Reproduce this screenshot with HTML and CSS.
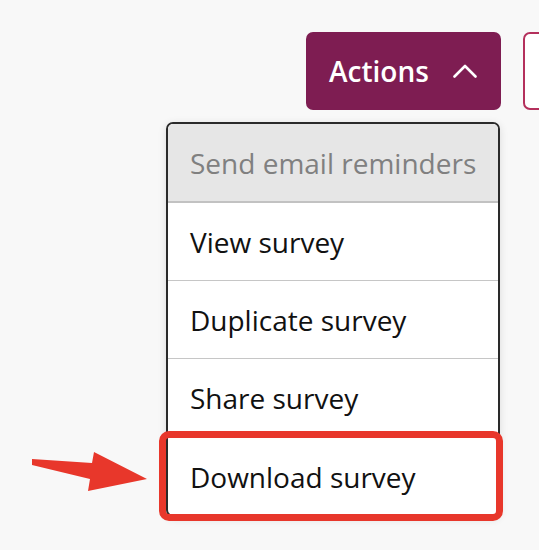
FILE: index.html
```html
<!DOCTYPE html>
<html>
<head>
<meta charset="utf-8">
<link rel="stylesheet" href="styles.css">
</head>
<body>
<div class="page">
  <div class="toolbar">
    <div class="dropdown">
      <button class="actions-btn">
        <span>Actions</span>
        <svg class="chev" width="24" height="14" viewBox="0 0 24 14"><path d="M1.5 12.5 L12 2 L22.5 12.5" fill="none" stroke="#fff" stroke-width="2.6" stroke-linecap="round" stroke-linejoin="round"/></svg>
      </button>
      <ul class="menu">
        <li class="item disabled">Send email reminders</li>
        <li class="item">View survey</li>
        <li class="item">Duplicate survey</li>
        <li class="item">Share survey</li>
        <li class="item">Download survey</li>
      </ul>
      <div class="highlight"></div>
    </div>
    <button class="second-btn"></button>
  </div>
  <svg class="arrow" width="120" height="42" viewBox="0 0 120 42"><polygon points="0,7 60,11 62,0 115,27 56,39 58,27 0,13" fill="#e8372b"/></svg>
</div>
</body>
</html>
```

FILE: styles.css
```css
html, body {
  margin: 0;
  padding: 0;
  background: #f8f8f8;
  overflow: hidden;
}
body {
  width: 539px;
  height: 550px;
  font-family: "Open Sans", "Noto Sans", sans-serif;
}
.page {
  position: relative;
  width: 539px;
  height: 550px;
}
.toolbar {
  display: flex;
  gap: 22px;
  padding: 32px 0 0 306px;
}
.dropdown {
  position: relative;
}
.actions-btn {
  display: flex;
  align-items: center;
  width: 195px;
  height: 78px;
  padding: 0 24px 0 23px;
  border: none;
  border-radius: 7px;
  background: #7e1d52;
  color: #fff;
  font-family: "Open Sans", "Noto Sans", sans-serif;
  font-weight: 600;
  font-size: 28px;
  box-sizing: border-box;
  justify-content: space-between;
}
.actions-btn span {
  line-height: 1;
  margin-top: 0;
}
.chev {
  display: block;
}
.second-btn {
  flex: none;
  width: 160px;
  height: 78px;
  border: 2px solid #b4305c;
  border-radius: 7px;
  background: #fff;
  box-sizing: border-box;
}
.menu {
  position: absolute;
  top: 90px;
  right: 1px;
  width: 334px;
  margin: 0;
  padding: 0;
  list-style: none;
  background: #fff;
  border: 2px solid #2a2a2a;
  border-radius: 7px;
  box-sizing: border-box;
  overflow: hidden;
  box-shadow: 0 2px 8px rgba(0,0,0,0.12);
}
.item {
  display: flex;
  align-items: center;
  height: 77px;
  padding: 0 0 0 22px;
  font-size: 28px;
  color: #111;
  border-bottom: 1px solid #c6c6c6;
  box-sizing: content-box;
}
.item:last-child {
  border-bottom: none;
  height: 76px;
  padding-top: 2px;
}
.item.disabled {
  background: #e6e6e6;
  color: #808080;
  border-bottom: 2px solid #c2c2c2;
}
.highlight {
  position: absolute;
  left: -147px;
  top: 399px;
  width: 344px;
  height: 90px;
  border: 7px solid #e8372b;
  border-radius: 10px;
  box-sizing: border-box;
}
.arrow {
  position: absolute;
  left: 32px;
  top: 452px;
}
```
